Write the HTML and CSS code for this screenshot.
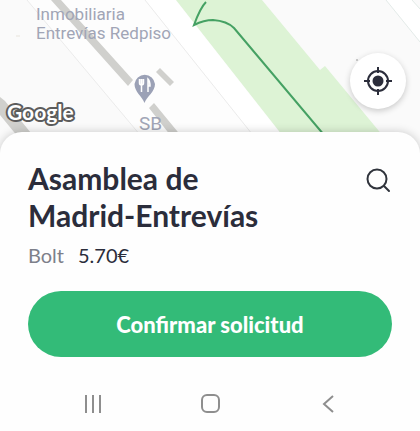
FILE: index.html
```html
<!DOCTYPE html>
<html lang="es">
<head>
<meta charset="utf-8" />
<title>Confirmar solicitud</title>
<meta name="viewport" content="width=device-width, initial-scale=1" />
<link rel="stylesheet" href="styles.css">
</head>
<body>
  <section class="map">
    <svg class="map-canvas" viewBox="0 0 420 154" preserveAspectRatio="xMidYMin slice" role="img" aria-label="Mapa">
      <rect width="420" height="154" fill="#fafafa" />
      <!-- roads -->
      <path d="M27 0H145L274 154H156Z" fill="#fdfdfd" />
      <path d="M145 0H176L297 154H268Z" fill="#fff" />
      <path d="M386 0H412L420 9V42Z" fill="#fff" />
      <path d="M27 0L156 154M145 0L268 154" fill="none" stroke="#ebebeb" />
      <path d="M386 0L420 42M412 0L420 9" fill="none" stroke="#e3ebe8" />
      <!-- park -->
      <path d="M176 0H262L320 70L325 66L398 154H297Z" fill="#ddf3d5" />
      <path d="M206 2C201 7 198 14 194 25C200 22 206 20 213 20Q227 21 234 28L340 154" fill="none" stroke="#45a163" stroke-width="2" />
      <!-- buildings -->
      <path d="M51 0H61L133 80L128 86ZM156 72L160 68L174 82L170 86ZM149 108L154 103L196 154H185ZM0 97L5 101L48 154H32L0 115Z" fill="#d0d0cd" />
      <circle cx="357" cy="60" r="1" fill="#bbb" />
      <path d="M16 36H20" stroke="#e8e4dc" />
      <g class="map-label">
        <text x="36" y="20">Inmobiliaria</text>
        <text x="36" y="39">Entrevías Redpiso</text>
        <text class="map-label-large" x="139" y="130">SB</text>
      </g>
      <path d="M144.500 103C142 96 134.500 92 134.500 84A10.300 10.300 0 0 1 155 84C155 92 147 96 144.500 103Z" fill="#9ba1b6" />
      <path d="M139.500 79V83Q139.500 85 141.500 85Q143.500 85 143.500 83V79M141.500 79V92M148 92V79Q150 81 150 86H148" fill="#fff" fill-opacity=".6" stroke="#fff" stroke-width="1.500" />
      <text class="map-logo" x="7" y="120">Google</text>
    </svg>
    <button class="locate" type="button" aria-label="Mi ubicación">
      <svg width="28" height="28" viewBox="0 0 28 28" fill="none" stroke="#2b2d3b" stroke-width="2">
        <circle cx="14" cy="14" r="10" />
        <circle cx="14" cy="14" r="5.500" fill="#2b2d3b" stroke="none" />
        <path d="M14 0V6M14 22V28M0 14H6M22 14H28" />
      </svg>
    </button>
  </section>
  <main class="sheet">
    <header class="trip">
      <h1>Asamblea de Madrid-Entrevías</h1>
      <button class="search" type="button" aria-label="Buscar">
        <svg width="26" height="26" viewBox="0 0 26 26" fill="none" stroke="#30343c" stroke-width="2" stroke-linecap="round">
          <circle cx="11" cy="11" r="9.500" />
          <path d="M18 18L23 23" />
        </svg>
      </button>
    </header>
    <p class="fare"><span class="fare-name">Bolt</span><span>5.70€</span></p>
    <button class="confirm" type="button">Confirmar solicitud</button>
  </main>
  <nav class="system-bar">
    <button type="button" aria-label="Recientes">
      <svg width="20" height="20" viewBox="0 0 20 20" fill="none" stroke="#8e8e8e" stroke-width="2"><path d="M4 1V19M11 1V19M18 1V19" /></svg>
    </button>
    <button type="button" aria-label="Inicio">
      <svg width="20" height="20" viewBox="0 0 20 20" fill="none" stroke="#8e8e8e" stroke-width="2"><rect x="2" y="1" width="17" height="17" rx="5" /></svg>
    </button>
    <button type="button" aria-label="Atrás">
      <svg width="20" height="20" viewBox="0 0 20 20" fill="none" stroke="#8e8e8e" stroke-width="2"><path d="M15 2L6 10L15 18" /></svg>
    </button>
  </nav>
</body>
</html>
```
FILE: styles.css
```css
html, body {
  min-height: 100%;
}
body {
  margin: 0;
  background: #fefefe;
  color: #2b2d3b;
  font-family: Lato, "Liberation Sans", sans-serif;
}
button {
  display: flex;
  align-items: center;
  justify-content: center;
  padding: 0;
  border: none;
  background: none;
  color: inherit;
  font-family: inherit;
  cursor: pointer;
}
.map {
  position: relative;
  height: 154px;
}
.map-canvas {
  display: block;
  width: 100%;
  height: 100%;
}
.map-label {
  fill: #a1a5b6;
  font-family: Roboto, sans-serif;
  font-size: 17px;
}
.map-label-large {
  font-size: 19px;
}
.map-logo {
  fill: #fff;
  stroke: #5c5c5c;
  stroke-width: 4px;
  stroke-linejoin: round;
  paint-order: stroke;
  font-family: Lato, sans-serif;
  font-size: 21px;
  font-weight: 700;
}
.locate {
  position: absolute;
  top: 53px;
  right: 14px;
  width: 56px;
  height: 56px;
  border-radius: 50%;
  background: #fff;
  box-shadow: 0 2px 6px rgba(0,0,0,0.2);
}
.sheet {
  position: relative;
  margin-top: -22px;
  padding: 28px 28px 0;
  border-radius: 22px 22px 0 0;
  background: #fefefe;
  box-shadow: 0 0 10px rgba(0,0,0,0.2);
  clip-path: inset(-12px 0 0 0);
}
.trip {
  display: flex;
  align-items: flex-start;
  justify-content: space-between;
}
.trip h1 {
  max-width: 260px;
  margin: 0;
  font-size: 30px;
  font-weight: 700;
  line-height: 37px;
}
.search {
  margin-top: 8px;
}
.fare {
  display: flex;
  gap: 14px;
  margin: 9px 0 0;
  font-size: 20px;
  line-height: 24px;
}
.fare-name {
  color: #7d808a;
}
.confirm {
  width: 100%;
  height: 66px;
  margin-top: 24px;
  border-radius: 33px;
  background: #33bb78;
  color: #fff;
  font-size: 22px;
  font-weight: 900;
}
.system-bar {
  display: flex;
  justify-content: space-between;
  padding: 37px 82px 16px;
}
```
